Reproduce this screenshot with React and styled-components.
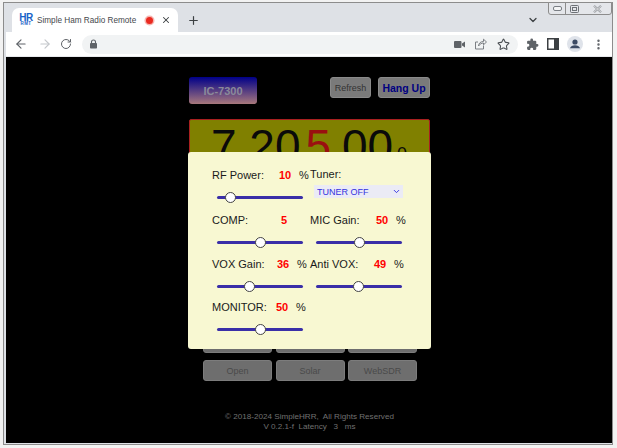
import React from 'react';
import styled, { createGlobalStyle } from 'styled-components';
import {
  ArrowLeft,
  ArrowRight,
  RotateCw,
  Star,
  X,
  Plus,
  ChevronDown,
  EllipsisVertical,
} from 'lucide-react';

const GlobalStyle = createGlobalStyle`
  html, body {
    margin: 0;
    padding: 0;
    background: #f2f2f2;
    overflow: hidden;
  }
  * {
    box-sizing: border-box;
  }
`;

const Screen = styled.div`
  width: 617px;
  height: 448px;
  padding: 2px 4px 3px 3px;
  background: #f2f2f2;
  font-family: 'Liberation Sans', Arial, sans-serif;
`;

const Win = styled.div`
  position: relative;
  width: 100%;
  height: 100%;
  display: flex;
  flex-direction: column;
  border: 1px solid #8c8c8c;
  padding: 0 0 1px 2px;
  background: #dee1e6;
`;

const TabStrip = styled.div`
  height: 29px;
  display: flex;
  align-items: flex-end;
  padding-left: 6px;
  background: #dee1e6;
`;

const Tab = styled.div`
  width: 166px;
  height: 24px;
  display: flex;
  align-items: center;
  padding: 0 7px 0 8px;
  background: #ffffff;
  border-radius: 7px 7px 0 0;
`;

const Favicon = styled.div`
  width: 12px;
  display: flex;
  flex-direction: column;
  align-items: center;
  color: #1a63c8;
  font-weight: bold;
  line-height: 1;
`;

const FavTop = styled.span`
  font-size: 10px;
  height: 8px;
  line-height: 8px;
  letter-spacing: -0.5px;
`;

const FavBottom = styled.span`
  font-size: 4.5px;
  height: 4px;
  line-height: 4px;
  letter-spacing: 0.4px;
`;

const TabTitle = styled.span`
  flex: 1;
  margin-left: 5px;
  font-size: 8.2px;
  color: #45484c;
  white-space: nowrap;
`;

const RecordDot = styled.span`
  width: 7px;
  height: 7px;
  margin-right: 8px;
  border-radius: 50%;
  background: #ea2a20;
  box-shadow: 0 0 0 1.5px #f6b5b0;
`;

const NewTab = styled.div`
  width: 28px;
  height: 24px;
  margin-left: 1px;
  display: flex;
  align-items: center;
  justify-content: center;
  color: #3c4043;
`;

const StripMore = styled.div`
  margin-left: auto;
  margin-right: 73px;
  height: 24px;
  display: flex;
  align-items: center;
  color: #3c4043;
`;

const WinButtons = styled.div`
  position: absolute;
  top: -1px;
  right: 0;
  width: 64px;
  height: 13px;
  display: flex;
  align-items: center;
  background: #e4e6ea;
  border: 1px solid #8c8c8c;
  border-radius: 0 0 3px 3px;
`;

const WinButton = styled.span`
  display: flex;
  align-items: center;
  justify-content: center;
  width: ${p => p.$w}px;
  height: 100%;
  border-right: ${p => (p.$divide ? '1px solid #8c8c8c' : 'none')};
`;

const Toolbar = styled.div`
  height: 25px;
  padding-left: 2px;
  display: flex;
  align-items: center;
  background: #ffffff;
  border-bottom: 1px solid #e8eaed;
`;

const NavIcon = styled.span`
  width: ${p => p.$w || 22}px;
  display: flex;
  justify-content: center;
  align-items: center;
  color: ${p => p.$color || '#5f6368'};
`;

const Omnibox = styled.div`
  width: 436px;
  height: 19px;
  margin: 0 4px 0 6px;
  padding: 0 8px 0 7px;
  display: flex;
  align-items: center;
  justify-content: space-between;
  border-radius: 10px;
  background: #f1f3f4;
`;

const OmniRight = styled.div`
  display: flex;
  align-items: center;
  gap: 10px;
`;

const Page = styled.div`
  position: relative;
  flex: 1;
  display: flex;
  flex-direction: column;
  align-items: center;
  padding: 20px 0 0 1px;
  background: #000000;
  overflow: hidden;
`;

const Column = styled.div`
  width: 241px;
  display: flex;
  flex-direction: column;
`;

const TopRow = styled.div`
  height: 27px;
  display: flex;
  align-items: flex-start;
  justify-content: space-between;
`;

const RigName = styled.div`
  width: 68px;
  height: 27px;
  display: flex;
  align-items: center;
  justify-content: center;
  border-radius: 3px;
  background: linear-gradient(#000088, #a8787c);
  color: #8a8a9a;
  font-size: 11px;
  font-weight: bold;
`;

const TopActions = styled.div`
  display: flex;
  gap: 7px;
`;

const GreyButton = styled.div`
  height: 21px;
  width: ${p => p.$w}px;
  display: flex;
  align-items: center;
  justify-content: center;
  border-radius: 3px;
  border: 1px solid #8a8a8a;
  background: #7a7a7a;
  color: ${p => p.$color || '#333333'};
  font-size: ${p => p.$size || 9}px;
  font-weight: ${p => (p.$bold ? 'bold' : 'normal')};
`;

const FreqPanel = styled.div`
  height: 66px;
  margin-top: 15px;
  padding: 2px 0 0 21px;
  display: flex;
  align-items: flex-start;
  border: 1px solid #a82020;
  border-radius: 2px;
  background: #808000;
  color: #0a0a0a;
  font-size: 46px;
  line-height: 48px;
  white-space: nowrap;
`;

const RedDigit = styled.span`
  margin: 0 -2px 0 5px;
  color: #9a1010;
`;

const SmallDigit = styled.span`
  font-size: 18px;
  line-height: 18px;
  margin: 23px 0 0 4px;
`;

const ButtonGrid = styled.div`
  margin: 7px 13px 0 14px;
  display: grid;
  grid-template-columns: repeat(3, 69px);
  justify-content: space-between;
  row-gap: 7px;
`;

const GridButton = styled.div`
  height: 21px;
  display: flex;
  align-items: center;
  justify-content: center;
  border-radius: 3px;
  border: 1px solid #7c7c7c;
  background: #6e6e6e;
  color: #4a4a4a;
  font-size: 9px;
`;

const Footer = styled.div`
  margin-top: 31px;
  text-align: center;
  color: #707070;
  font-size: 8.1px;
  line-height: 10px;
  white-space: pre;
`;

const Dialog = styled.div`
  position: absolute;
  top: 95px;
  left: 182px;
  width: 243px;
  height: 197px;
  padding: 16px 0 0 24px;
  display: grid;
  grid-template-columns: 98px 98px;
  grid-template-rows: 45px 44px 43px 44px;
  align-content: start;
  border-radius: 3px;
  background: #f8f8d2;
`;

const Cell = styled.div`
  display: flex;
  flex-direction: column;

  &:nth-child(even) input {
    margin-left: 6px;
  }
`;

const ValueRow = styled.div`
  height: 14px;
  display: flex;
  align-items: center;
  font-size: 11px;
  color: #1a1a1a;
  white-space: nowrap;
`;

const TunerLabel = styled(ValueRow)`
  margin-top: -1px;
`;

const Label = styled.span`
  width: ${p => p.$w}px;
`;

const Value = styled.span`
  width: 12px;
  text-align: right;
  color: #ff0000;
  font-weight: bold;
`;

const Unit = styled.span`
  margin-left: 8px;
`;

const Slider = styled.input.attrs({ type: 'range', readOnly: true })`
  -webkit-appearance: none;
  appearance: none;
  display: block;
  width: 86px;
  height: 12px;
  margin: 9px 0 0 5px;
  padding: 0;
  background: transparent;

  &::-webkit-slider-runnable-track {
    height: 3px;
    border-radius: 2px;
    background: #3a2fa8;
  }

  &::-webkit-slider-thumb {
    -webkit-appearance: none;
    width: 11px;
    height: 11px;
    margin-top: -4px;
    border: 1px solid #444444;
    border-radius: 50%;
    background: #ffffff;
  }
`;

const TunerField = styled.div`
  position: relative;
  width: 89px;
  height: 13px;
  margin: 4px 0 0 4px;
  color: #3232e0;
`;

const TunerSelect = styled.select`
  -webkit-appearance: none;
  appearance: none;
  display: block;
  width: 100%;
  height: 100%;
  padding: 0 0 0 3px;
  border: none;
  border-radius: 0;
  background: #ebebf5;
  color: inherit;
  font-family: inherit;
  font-size: 9px;
`;

const TunerArrow = styled.span`
  position: absolute;
  top: 2px;
  right: 2px;
  display: flex;
  pointer-events: none;
`;

const LockIcon = () => (
  <svg width="9" height="10" viewBox="0 0 9 10">
    <path d="M2.5 4.5V3a2 2 0 0 1 4 0v1.5" fill="none" stroke="#5f6368" strokeWidth="1.1" />
    <rect x="1" y="4" width="7" height="5.5" rx="0.8" fill="#5f6368" />
  </svg>
);

const PuzzleIcon = () => (
  <svg width="13" height="13" viewBox="0 0 24 24" fill="#5f6368">
    <path d="M20.5 11H19V7a2 2 0 0 0-2-2h-4V3.5a2.5 2.5 0 0 0-5 0V5H4a2 2 0 0 0-2 2v3.8h1.5a2.7 2.7 0 0 1 0 5.4H2V20a2 2 0 0 0 2 2h3.8v-1.5a2.7 2.7 0 0 1 5.4 0V22H17a2 2 0 0 0 2-2v-4h1.5a2.5 2.5 0 0 0 0-5z" />
  </svg>
);

const SidePanelIcon = () => (
  <svg width="12" height="12" viewBox="0 0 12 12">
    <rect x="0.75" y="0.75" width="10.5" height="10.5" fill="none" stroke="#3c4043" strokeWidth="1.5" />
    <rect x="7" y="1" width="4" height="10" fill="#3c4043" />
  </svg>
);

const AvatarIcon = () => (
  <svg width="16" height="16" viewBox="0 0 16 16">
    <circle cx="8" cy="8" r="8" fill="#dfe3ea" />
    <circle cx="8" cy="6" r="2.6" fill="#3c4a63" />
    <path d="M3 12.2c.5-2 2.6-3 5-3s4.5 1 5 3z" fill="#3c4a63" />
  </svg>
);

const CameraIcon = () => (
  <svg width="11" height="9" viewBox="0 0 11 9" fill="#5f6368">
    <rect x="0" y="1" width="7.5" height="7" rx="1" />
    <path d="M8 3.5 11 1.5v6L8 5.5z" />
  </svg>
);

const ShareIcon = () => (
  <svg width="12" height="12" viewBox="0 0 12 12" fill="none" stroke="#7b7f84" strokeWidth="1">
    <path d="M8.5 7.5v3.5h-8V4h2.5" />
    <path d="M3.5 8c.3-3 2.2-4.5 5-4.5V1.2L11.5 4 8.5 6.8V5C6.5 5 5 6 3.5 8z" />
  </svg>
);

const MinIcon = () => (
  <svg width="9" height="5" viewBox="0 0 9 5">
    <rect x="0.5" y="0.5" width="8" height="4" rx="1.5" fill="#f4f5f6" stroke="#7a7e84" />
  </svg>
);

const MaxIcon = () => (
  <svg width="9" height="8" viewBox="0 0 9 8">
    <rect x="0.5" y="0.5" width="8" height="7" rx="1" fill="none" stroke="#6d7176" />
    <rect x="2.5" y="2.5" width="4" height="3" fill="none" stroke="#6d7176" />
  </svg>
);

const CloseIcon = () => (
  <svg width="9" height="8" viewBox="0 0 9 8">
    <path d="M1 0.8 8 7.2M8 0.8 1 7.2" stroke="#8f9398" strokeWidth="2" />
    <path d="M1 0.8 8 7.2M8 0.8 1 7.2" stroke="#f2f3f4" strokeWidth="0.8" />
  </svg>
);

const rows = [
  [
    { label: 'RF Power:', w: 67, value: '10', percent: true, range: 10 },
    { tuner: true },
  ],
  [
    { label: 'COMP:', w: 63, value: '5', max: 10, range: 5 },
    { label: 'MIC Gain:', w: 66, value: '50', percent: true, range: 50 },
  ],
  [
    { label: 'VOX Gain:', w: 65, value: '36', percent: true, range: 36 },
    { label: 'Anti VOX:', w: 64, value: '49', percent: true, range: 49 },
  ],
  [{ label: 'MONITOR:', w: 64, value: '50', percent: true, range: 50 }],
];

const gridLabels = [
  '', '', '',
  '', '', '',
  '', '', '',
  '', '', '',
  '', '', '',
  '', '', '',
  'Open', 'Solar', 'WebSDR',
];

function App() {
  return (
    <Screen>
      <GlobalStyle />
      <Win>
        <WinButtons>
          <WinButton $w={17} $divide><MinIcon /></WinButton>
          <WinButton $w={17}><MaxIcon /></WinButton>
          <WinButton $w={28}><CloseIcon /></WinButton>
        </WinButtons>
        <TabStrip>
          <Tab>
            <Favicon>
              <FavTop>HR</FavTop>
              <FavBottom>RMT</FavBottom>
            </Favicon>
            <TabTitle>Simple Ham Radio Remote</TabTitle>
            <RecordDot />
            <X size={10} color="#3c4043" strokeWidth={2.5} />
          </Tab>
          <NewTab><Plus size={13} strokeWidth={2.2} /></NewTab>
          <StripMore><ChevronDown size={12} strokeWidth={2.5} /></StripMore>
        </TabStrip>
        <Toolbar>
          <NavIcon $w={26}><ArrowLeft size={14} /></NavIcon>
          <NavIcon $w={22} $color="#c4c7cb"><ArrowRight size={14} /></NavIcon>
          <NavIcon $w={20}><RotateCw size={12} /></NavIcon>
          <Omnibox>
            <LockIcon />
            <OmniRight>
              <CameraIcon />
              <ShareIcon />
              <Star size={13} color="#4a4e52" />
            </OmniRight>
          </Omnibox>
          <NavIcon $w={20}><PuzzleIcon /></NavIcon>
          <NavIcon $w={22}><SidePanelIcon /></NavIcon>
          <NavIcon $w={22}><AvatarIcon /></NavIcon>
          <NavIcon $w={24}><EllipsisVertical size={13} strokeWidth={2.5} /></NavIcon>
        </Toolbar>
        <Page>
          <Column>
            <TopRow>
              <RigName>IC-7300</RigName>
              <TopActions>
                <GreyButton $w={41}>Refresh</GreyButton>
                <GreyButton $w={52} $color="#000080" $size={10.5} $bold>Hang Up</GreyButton>
              </TopActions>
            </TopRow>
            <FreqPanel>
              <span>7.20</span>
              <RedDigit>5</RedDigit>
              <span>.00</span>
              <SmallDigit>0</SmallDigit>
            </FreqPanel>
            <ButtonGrid>
              {gridLabels.map((label, i) => (
                <GridButton key={i}>{label}</GridButton>
              ))}
            </ButtonGrid>
            <Footer>
              {'© 2018-2024 SimpleHRR,  All Rights Reserved\nV 0.2.1-f  Latency   3   ms'}
            </Footer>
          </Column>
          <Dialog>
            {rows.map(row =>
              row.map(item =>
                item.tuner ? (
                  <Cell key="tuner">
                    <TunerLabel>Tuner:</TunerLabel>
                    <TunerField>
                      <TunerSelect defaultValue="off">
                        <option value="off">TUNER OFF</option>
                      </TunerSelect>
                      <TunerArrow><ChevronDown size={9} strokeWidth={2.5} /></TunerArrow>
                    </TunerField>
                  </Cell>
                ) : (
                  <Cell key={item.label}>
                    <ValueRow>
                      <Label $w={item.w}>{item.label}</Label>
                      <Value>{item.value}</Value>
                      {item.percent && <Unit>%</Unit>}
                    </ValueRow>
                    <Slider min={0} max={item.max || 100} defaultValue={item.range} />
                  </Cell>
                ),
              ),
            )}
          </Dialog>
        </Page>
      </Win>
    </Screen>
  );
}

export default App;
